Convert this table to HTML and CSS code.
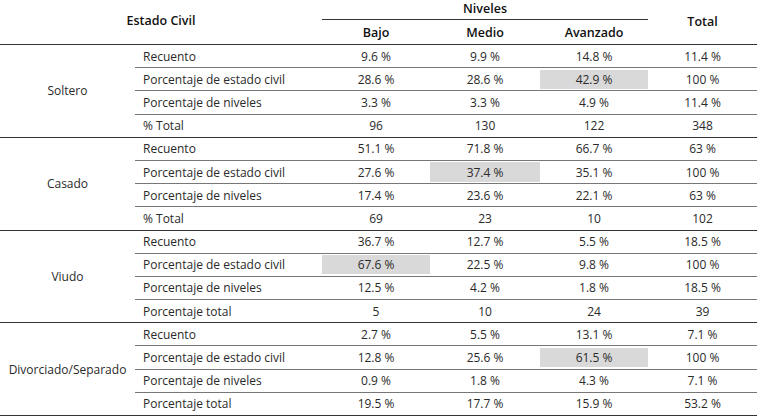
FILE: index.html
```html
<!DOCTYPE html>
<html lang="es">
<head>
<meta charset="utf-8">
<link rel="stylesheet" href="styles.css">
</head>
<body>
<table class="tbl">
  <colgroup>
    <col class="c-group"><col class="c-label"><col class="c-num"><col class="c-num2"><col class="c-num"><col class="c-tot">
  </colgroup>
  <thead>
    <tr class="h1">
      <th colspan="2" rowspan="2" class="th-estado">Estado Civil</th>
      <th colspan="3" class="th-niveles">Niveles</th>
      <th rowspan="2" class="th-total">Total</th>
    </tr>
    <tr class="h2">
      <th class="th-sub">Bajo</th>
      <th class="th-sub">Medio</th>
      <th class="th-sub">Avanzado</th>
    </tr>
  </thead>
  <tbody class="grp">
    <tr><td rowspan="4" class="g">Soltero</td><td class="l">Recuento</td><td>9.6 %</td><td>9.9 %</td><td>14.8 %</td><td>11.4 %</td></tr>
    <tr><td class="l">Porcentaje de estado civil</td><td>28.6 %</td><td>28.6 %</td><td class="hl">42.9 %</td><td>100 %</td></tr>
    <tr><td class="l">Porcentaje de niveles</td><td>3.3 %</td><td>3.3 %</td><td>4.9 %</td><td>11.4 %</td></tr>
    <tr class="last"><td class="l">% Total</td><td>96</td><td>130</td><td>122</td><td>348</td></tr>
  </tbody>
  <tbody class="grp">
    <tr><td rowspan="4" class="g">Casado</td><td class="l">Recuento</td><td>51.1 %</td><td>71.8 %</td><td>66.7 %</td><td>63 %</td></tr>
    <tr><td class="l">Porcentaje de estado civil</td><td>27.6 %</td><td class="hl">37.4 %</td><td>35.1 %</td><td>100 %</td></tr>
    <tr><td class="l">Porcentaje de niveles</td><td>17.4 %</td><td>23.6 %</td><td>22.1 %</td><td>63 %</td></tr>
    <tr class="last"><td class="l">% Total</td><td>69</td><td>23</td><td>10</td><td>102</td></tr>
  </tbody>
  <tbody class="grp">
    <tr><td rowspan="4" class="g">Viudo</td><td class="l">Recuento</td><td>36.7 %</td><td>12.7 %</td><td>5.5 %</td><td>18.5 %</td></tr>
    <tr><td class="l">Porcentaje de estado civil</td><td class="hl">67.6 %</td><td>22.5 %</td><td>9.8 %</td><td>100 %</td></tr>
    <tr><td class="l">Porcentaje de niveles</td><td>12.5 %</td><td>4.2 %</td><td>1.8 %</td><td>18.5 %</td></tr>
    <tr class="last"><td class="l">Porcentaje total</td><td>5</td><td>10</td><td>24</td><td>39</td></tr>
  </tbody>
  <tbody class="grp">
    <tr><td rowspan="4" class="g">Divorciado/Separado</td><td class="l">Recuento</td><td>2.7 %</td><td>5.5 %</td><td>13.1 %</td><td>7.1 %</td></tr>
    <tr><td class="l">Porcentaje de estado civil</td><td>12.8 %</td><td>25.6 %</td><td class="hl">61.5 %</td><td>100 %</td></tr>
    <tr><td class="l">Porcentaje de niveles</td><td>0.9 %</td><td>1.8 %</td><td>4.3 %</td><td>7.1 %</td></tr>
    <tr class="last"><td class="l">Porcentaje total</td><td>19.5 %</td><td>17.7 %</td><td>15.9 %</td><td>53.2 %</td></tr>
  </tbody>
</table>
</body>
</html>
```

FILE: styles.css
```css
html, body {
  margin: 0;
  padding: 0;
  background: #fff;
}
body {
  font-family: "Open Sans", "Noto Sans", sans-serif;
  font-size: 12px;
  color: #2a2a2a;
}
.tbl {
  border-collapse: collapse;
  table-layout: fixed;
  width: 757px;
}
.c-group { width: 135px; }
.c-label { width: 187px; }
.c-num { width: 108px; }
.c-num2 { width: 110px; }
.c-tot { width: 109px; }

th {
  font-size: 12.5px;
  font-weight: 600;
  padding: 0;
  text-align: center;
  color: #111;
}
.h1 th { height: 19px; }
.h2 th { height: 24px; }
.th-estado { vertical-align: middle; padding-bottom: 3px; }
.th-niveles {
  vertical-align: top;
  border-bottom: 1px solid #333;
  line-height: 17px;
}
.th-total { vertical-align: middle; padding-bottom: 2px; }
thead tr.h2 th, .th-estado, .th-total { border-bottom: 1px solid #333; }

td {
  padding: 0;
  height: 23.2px;
  box-sizing: border-box;
  text-align: center;
  vertical-align: middle;
  border-bottom: 1px solid #777;
}
td.l { text-align: left; padding-left: 8px; }
td.g { border-bottom: 1px solid #333; }
tr.last td { border-bottom: 1px solid #333; }
td.hl {
  background: #d9d9d9;
  background-clip: content-box;
  padding: 2px 0;
}
```
